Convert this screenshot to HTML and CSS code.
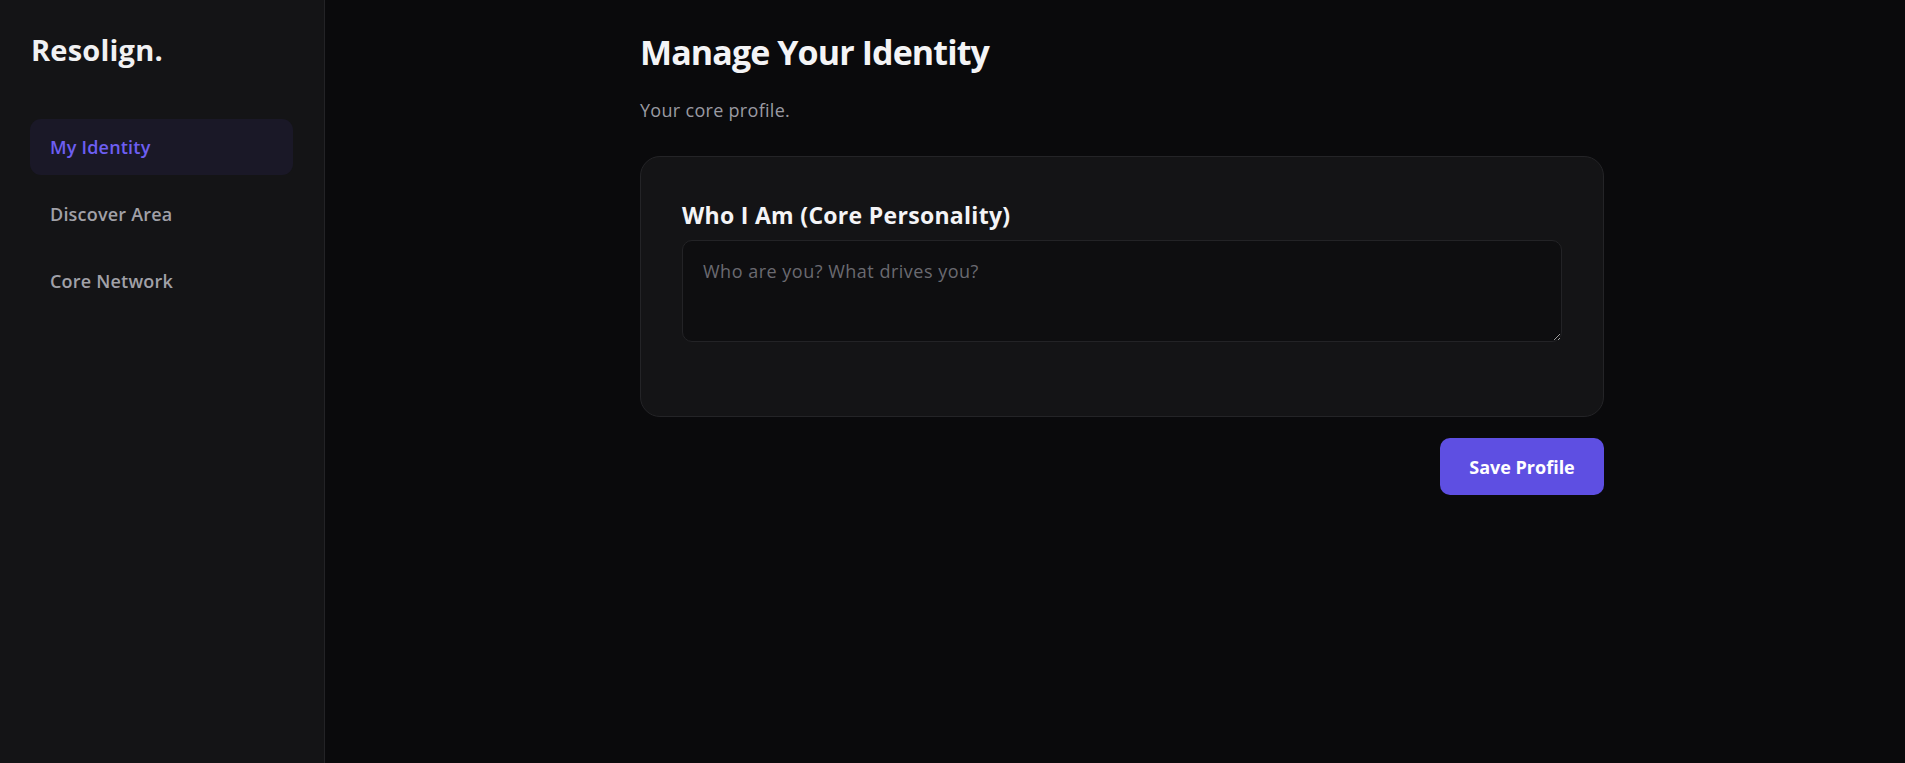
FILE: index.html
```html
<!DOCTYPE html>
<html lang="en">
<head>
<meta charset="utf-8">
<title>Resolign</title>
<link rel="stylesheet" href="styles.css">
</head>
<body>
<div class="app">
  <aside class="sidebar">
    <div class="logo">Resolign.</div>
    <nav class="nav">
      <a class="nav-item active">My Identity</a>
      <a class="nav-item">Discover Area</a>
      <a class="nav-item">Core Network</a>
    </nav>
  </aside>
  <main class="main">
    <div class="content">
      <h1 class="title">Manage Your Identity</h1>
      <p class="subtitle">Your core profile.</p>
      <section class="card">
        <h2 class="card-title">Who I Am (Core Personality)</h2>
        <textarea class="field" placeholder="Who are you? What drives you?"></textarea>
      </section>
      <div class="actions">
        <button class="btn">Save Profile</button>
      </div>
    </div>
  </main>
</div>
</body>
</html>
```
FILE: styles.css
```css
* { box-sizing: border-box; }
html, body { margin: 0; height: 100%; }
body {
  background: #0a0a0c;
  color: #f2f2f4;
  font-family: "Open Sans", "Lato", sans-serif;
}
.app { display: flex; min-height: 100vh; }
.sidebar {
  width: 325px;
  flex-shrink: 0;
  background: #141416;
  border-right: 1px solid #232326;
  padding: 30px 30px;
  display: flex;
  flex-direction: column;
}
.logo {
  font-size: 29px;
  font-weight: 700;
  color: #f1f1f3;
  letter-spacing: 0.2px;
  line-height: 40px;
  margin-left: 1px;
}
.nav {
  margin-top: 49px;
  display: flex;
  flex-direction: column;
  gap: 11px;
  width: 263px;
}
.nav-item {
  display: flex;
  align-items: center;
  height: 56px;
  padding: 0 20px;
  border-radius: 11px;
  font-size: 18px;
  font-weight: 600;
  letter-spacing: 0.2px;
  color: #a1a1a8;
  cursor: pointer;
}
.nav-item.active {
  background: #1a1827;
  color: #6d5ef2;
}
.main {
  flex: 1;
  padding: 28px 40px 40px 54px;
}
.content {
  max-width: 964px;
  margin: 0 auto;
}
.title {
  margin: 0;
  font-size: 34px;
  font-weight: 700;
  line-height: 48px;
  letter-spacing: -0.9px;
  color: #f4f4f6;
}
.subtitle {
  margin: 22px 0 0;
  font-size: 18px;
  line-height: 24px;
  letter-spacing: 0.3px;
  color: #9a9aa2;
}
.card {
  margin-top: 34px;
  background: #141416;
  border: 1px solid #242427;
  border-radius: 20px;
  padding: 42px 41px 74px;
}
.card-title {
  margin: 0 0 9px;
  font-size: 23px;
  font-weight: 700;
  line-height: 32px;
  letter-spacing: 0.3px;
  color: #f4f4f6;
}
.field {
  display: block;
  width: 100%;
  height: 102px;
  background: #0e0e10;
  border: 1px solid #232326;
  border-radius: 10px;
  padding: 18px 20px;
  font-family: inherit;
  font-size: 18px;
  letter-spacing: 0.5px;
  color: #e6e6e8;
  resize: vertical;
  outline: none;
}
.field::placeholder { color: #6a6a70; }
.actions {
  display: flex;
  justify-content: flex-end;
  margin-top: 21px;
}
.btn {
  width: 164px;
  height: 57px;
  border: none;
  border-radius: 10px;
  background: #5e4fe2;
  color: #ffffff;
  font-family: inherit;
  font-size: 18px;
  font-weight: 700;
  cursor: pointer;
}
```
